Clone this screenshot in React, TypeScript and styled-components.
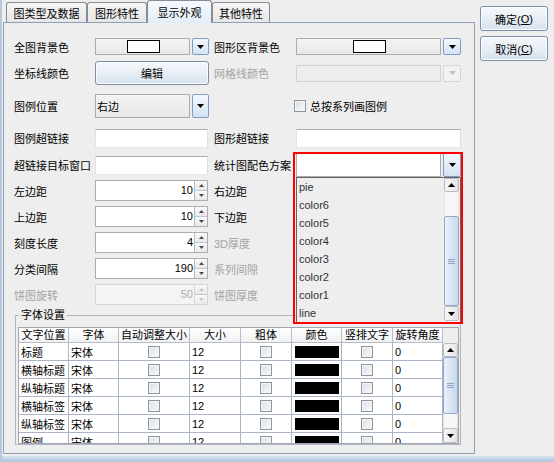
import styled, { createGlobalStyle } from "styled-components";

const GlobalStyle = createGlobalStyle`
  * { box-sizing: border-box; }
  html, body { margin: 0; padding: 0; background: #eeeeee; }
  body {
    font-family: "Liberation Sans", "Noto Sans CJK SC", sans-serif;
    font-size: 11px;
    color: #000;
  }
`;

const Dialog = styled.div`
  width: 554px;
  height: 462px;
  display: flex;
  flex-direction: column;
  background: #eeeeee;
  border-left: 2px solid #b7c8dc;
  overflow: hidden;
`;

const Main = styled.div`
  flex: 1;
  display: flex;
  min-height: 0;
`;

const BottomFrame = styled.div`
  height: 6px;
  background: linear-gradient(#d7e3f0, #aec3dc);
`;

const TabPane = styled.div`
  width: 472px;
  margin-left: 1px;
  display: flex;
  flex-direction: column;
  padding-bottom: 2px;
`;

const TabStrip = styled.div`
  height: 22px;
  display: flex;
  align-items: flex-end;
  padding-left: 3px;
`;

const Tab = styled.div<{ $w: number; $active?: boolean }>`
  width: ${(p) => p.$w}px;
  height: ${(p) => (p.$active ? 23 : 20)}px;
  margin-bottom: ${(p) => (p.$active ? -1 : 0)}px;
  position: relative;
  z-index: ${(p) => (p.$active ? 1 : 0)};
  border: 1px solid #898c95;
  border-bottom: none;
  border-radius: 3px 3px 0 0;
  background: ${(p) =>
    p.$active
      ? "linear-gradient(#f4f8fd, #e3edf8)"
      : "linear-gradient(#f7f7f7, #e6e6e6)"};
  display: flex;
  align-items: center;
  justify-content: center;
  white-space: nowrap;
`;

const Panel = styled.div`
  flex: 1;
  border: 1px solid #8e9fb6;
  background: #eeeeee;
  padding-left: 10px;
  display: flex;
  flex-direction: column;
`;

const FormRow = styled.div<{ $h: number; $mt: number }>`
  display: grid;
  grid-template-columns: 81px 114px 87px 165px;
  align-items: center;
  height: ${(p) => p.$h}px;
  margin-top: ${(p) => p.$mt}px;
`;

const Label = styled.div<{ $disabled?: boolean; $right?: boolean }>`
  white-space: nowrap;
  color: ${(p) => (p.$disabled ? "#a3a3a3" : "#000")};
  padding-left: ${(p) => (p.$right ? 5 : 0)}px;
`;

const TextField = styled.div<{ $w: number }>`
  width: ${(p) => p.$w}px;
  height: 19px;
  background: #fff;
  border: 1px solid;
  border-color: #abadb3 #dbdfe6 #e3e9ef #e2e3ea;
`;

const Spinner = styled.div<{ $disabled?: boolean }>`
  width: 113px;
  height: 21px;
  display: flex;
  border: 1px solid ${(p) => (p.$disabled ? "#d5d5d5" : "#abadb3")};
  background: ${(p) => (p.$disabled ? "#f4f4f4" : "#fff")};
`;

const SpinValue = styled.div<{ $disabled?: boolean }>`
  flex: 1;
  text-align: right;
  padding-right: 1px;
  line-height: 19px;
  color: ${(p) => (p.$disabled ? "#a8b0bc" : "#000")};
`;

const SpinButtons = styled.div<{ $disabled?: boolean }>`
  width: 13px;
  display: flex;
  flex-direction: column;
  border-left: 1px solid ${(p) => (p.$disabled ? "#d5d5d5" : "#b4b8bf")};
`;

const SpinBtn = styled.div`
  flex: 1;
  display: flex;
  align-items: center;
  justify-content: center;
  background: linear-gradient(#fafafa, #e8e8e8);
  & + & {
    border-top: 1px solid #c3c6cb;
  }
`;

const Combo = styled.div<{ $w: number; $h: number }>`
  width: ${(p) => p.$w}px;
  height: ${(p) => p.$h}px;
  display: flex;
  gap: 2px;
`;

const ComboBody = styled.div<{ $tone: "gray" | "white" | "off" }>`
  flex: 1;
  display: flex;
  align-items: center;
  padding-left: 1px;
  border: 1px solid ${(p) => (p.$tone === "off" ? "#d2d2d2" : "#acacac")};
  background: ${(p) =>
    p.$tone === "white"
      ? "#fff"
      : p.$tone === "off"
      ? "#eeeeee"
      : "linear-gradient(#f3f3f3, #e8e8e8)"};
`;

const ArrowBtn = styled.div<{ $w: number; $disabled?: boolean }>`
  width: ${(p) => p.$w}px;
  display: flex;
  align-items: center;
  justify-content: center;
  border: 1px solid ${(p) => (p.$disabled ? "#d2d5da" : "#7f9dc2")};
  border-radius: 2px;
  background: ${(p) =>
    p.$disabled ? "#f2f2f2" : "linear-gradient(#f3f8fd, #d3e2f3)"};
`;

const Swatch = styled.div`
  width: 33px;
  height: 13px;
  margin: 0 auto;
  background: #fff;
  border: 1px solid #000;
`;

const PushButton = styled.div<{ $w: number; $h: number }>`
  width: ${(p) => p.$w}px;
  height: ${(p) => p.$h}px;
  display: flex;
  align-items: center;
  justify-content: center;
  border: 1px solid #7d8ea6;
  border-radius: 3px;
  background: linear-gradient(#f6f9fc, #d7e2ee);
  box-shadow: inset 0 0 0 1px #fbfdff;
  white-space: nowrap;
`;

const CheckRow = styled.div`
  display: flex;
  align-items: center;
  gap: 4px;
  margin-left: -2px;
`;

const CheckBox = styled.span`
  display: inline-block;
  width: 12px;
  height: 12px;
  border: 1px solid #8e959e;
  background: linear-gradient(135deg, #d9dfe6, #f9fafb);
  box-shadow: inset 0 0 0 1px #f3f5f7;
`;

const ComboWrap = styled.div`
  position: relative;
`;

const Popup = styled.div`
  position: absolute;
  top: 100%;
  left: 0;
  width: 165px;
  height: 146px;
  border: 1px solid #646464;
  background: #eeeeee;
  display: flex;
  padding-right: 1px;
  z-index: 5;
`;

const ItemList = styled.div`
  flex: 1;
`;

const Item = styled.div`
  height: 18px;
  line-height: 18px;
  padding-left: 2px;
  color: #333;
`;

const Highlight = styled.div`
  position: absolute;
  left: -3px;
  top: -1px;
  width: 170px;
  height: 172px;
  border: 2px solid #ff0000;
  z-index: 6;
  pointer-events: none;
`;

const Group = styled.fieldset`
  margin: 4px 0 0 1px;
  width: 446px;
  padding: 5px 1px 0 2px;
  border: 1px solid #b0b6be;
  min-width: 0;
`;

const GroupTitle = styled.legend`
  padding: 0 2px;
  margin-left: 1px;
  line-height: 13px;
  font-size: 11px;
`;

const cols = [50, 50, 71, 51, 51, 50, 51, 50];
const gridCols = cols.map((c) => c + "px").join(" ");

const ScrollPane = styled.div`
  display: flex;
  border: 1px solid #a0a7b0;
  background: #eeeeee;
`;

const TableView = styled.div`
  width: 424px;
  display: flex;
  flex-direction: column;
`;

const HeaderRow = styled.div`
  display: grid;
  grid-template-columns: ${gridCols};
  height: 15px;
`;

const HeadCell = styled.div`
  border-right: 1px solid #b9bec6;
  border-bottom: 1px solid #b9bec6;
  background: linear-gradient(#ffffff, #f0f1f3);
  text-align: center;
  line-height: 14px;
  white-space: nowrap;
  overflow: hidden;
`;

const TableBody = styled.div`
  height: 100px;
  overflow: hidden;
  background: #fff;
`;

const BodyRow = styled.div`
  display: grid;
  grid-template-columns: ${gridCols};
  height: 18px;
`;

const Cell = styled.div<{ $center?: boolean }>`
  border-right: 1px solid #aab5c5;
  border-bottom: 1px solid #aab5c5;
  display: flex;
  align-items: center;
  justify-content: ${(p) => (p.$center ? "center" : "flex-start")};
  padding-left: ${(p) => (p.$center ? 0 : 2)}px;
  white-space: nowrap;
  overflow: hidden;
`;

const ColorChip = styled.div`
  width: 44px;
  height: 12px;
  background: #000;
`;

const SideColumn = styled.div`
  width: 15px;
  display: flex;
  flex-direction: column;
`;

const HeaderCorner = styled.div`
  height: 15px;
`;

const Bar = styled.div`
  width: 15px;
  display: flex;
  flex-direction: column;
  background: #f3f3f3;
`;

const BarArrow = styled.div<{ $h: number }>`
  height: ${(p) => p.$h}px;
  display: flex;
  align-items: center;
  justify-content: center;
  border: 1px solid #b9bdc3;
  border-radius: 2px;
  background: linear-gradient(90deg, #f7f7f7, #e4e4e4);
`;

const BarTrack = styled.div<{ $h: number }>`
  height: ${(p) => p.$h}px;
  border-left: 1px solid #e2e2e2;
  border-right: 1px solid #e2e2e2;
  background: #f6f6f6;
`;

const BarThumb = styled.div<{ $h: number }>`
  height: ${(p) => p.$h}px;
  display: flex;
  align-items: center;
  justify-content: center;
  border: 1px solid #92a8c6;
  border-radius: 2px;
  background: linear-gradient(90deg, #eaf1fa, #c9d9ed);
`;

const ButtonColumn = styled.div`
  display: flex;
  flex-direction: column;
  gap: 5px;
  padding: 6px 0 0 5px;
`;

const Mnemonic = styled.span`
  text-decoration: underline;
`;

function Down({ color = "#000" }: { color?: string }) {
  return (
    <svg width="7" height="4" viewBox="0 0 7 4">
      <polygon points="0,0 7,0 3.5,4" fill={color} />
    </svg>
  );
}

function Up({ color = "#000" }: { color?: string }) {
  return (
    <svg width="7" height="4" viewBox="0 0 7 4">
      <polygon points="0,4 7,4 3.5,0" fill={color} />
    </svg>
  );
}

function Tiny({ up, color }: { up?: boolean; color: string }) {
  return (
    <svg width="5" height="3" viewBox="0 0 5 3">
      <polygon points={up ? "0,3 5,3 2.5,0" : "0,0 5,0 2.5,3"} fill={color} />
    </svg>
  );
}

function Grip() {
  return (
    <svg width="7" height="5" viewBox="0 0 7 5">
      <path d="M0 0.5H7M0 2.5H7M0 4.5H7" stroke="#8ea4c2" strokeWidth="1" />
    </svg>
  );
}

function ScrollBar({
  arrow,
  before,
  thumb,
  after,
  down,
}: {
  arrow: number;
  before: number;
  thumb: number;
  after: number;
  down: number;
}) {
  return (
    <Bar>
      <BarArrow $h={arrow}>
        <Up />
      </BarArrow>
      <BarTrack $h={before} />
      <BarThumb $h={thumb}>
        <Grip />
      </BarThumb>
      <BarTrack $h={after} />
      <BarArrow $h={down}>
        <Down />
      </BarArrow>
    </Bar>
  );
}

function NumberSpinner({ value, disabled }: { value: string; disabled?: boolean }) {
  const c = disabled ? "#c0c6cf" : "#4a4a4a";
  return (
    <Spinner $disabled={disabled}>
      <SpinValue $disabled={disabled}>{value}</SpinValue>
      <SpinButtons $disabled={disabled}>
        <SpinBtn>
          <Tiny up color={c} />
        </SpinBtn>
        <SpinBtn>
          <Tiny color={c} />
        </SpinBtn>
      </SpinButtons>
    </Spinner>
  );
}

const tabs = [
  { name: "图类型及数据", w: 81 },
  { name: "图形特性", w: 60 },
  { name: "显示外观", w: 65, active: true },
  { name: "其他特性", w: 58 },
];

const spinRows = [
  { left: "左边距", value: "10", right: "右边距" },
  { left: "上边距", value: "10", right: "下边距" },
  { left: "刻度长度", value: "4", right: "3D厚度", rightOff: true },
  { left: "分类间隔", value: "190", right: "系列间隙", rightOff: true },
  { left: "饼图旋转", value: "50", right: "饼图厚度", leftOff: true, rightOff: true },
];

const schemes = ["pie", "color6", "color5", "color4", "color3", "color2", "color1", "line"];

const headers = ["文字位置", "字体", "自动调整大小", "大小", "粗体", "颜色", "竖排文字", "旋转角度"];

const fontRows = ["标题", "横轴标题", "纵轴标题", "横轴标签", "纵轴标签", "图例"];

export default function App() {
  return (
    <>
      <GlobalStyle />
      <Dialog>
        <Main>
          <TabPane>
            <TabStrip>
              {tabs.map((t) => (
                <Tab key={t.name} $w={t.w} $active={t.active}>
                  {t.name}
                </Tab>
              ))}
            </TabStrip>
            <Panel>
              <FormRow $h={21} $mt={13}>
                <Label>全图背景色</Label>
                <Combo $w={114} $h={17}>
                  <ComboBody $tone="gray">
                    <Swatch />
                  </ComboBody>
                  <ArrowBtn $w={17}>
                    <Down />
                  </ArrowBtn>
                </Combo>
                <Label $right>图形区背景色</Label>
                <Combo $w={165} $h={17}>
                  <ComboBody $tone="gray">
                    <Swatch />
                  </ComboBody>
                  <ArrowBtn $w={18}>
                    <Down />
                  </ArrowBtn>
                </Combo>
              </FormRow>

              <FormRow $h={26} $mt={3}>
                <Label>坐标线颜色</Label>
                <PushButton $w={114} $h={24}>编辑</PushButton>
                <Label $right $disabled>
                  网格线颜色
                </Label>
                <Combo $w={165} $h={17}>
                  <ComboBody $tone="off" />
                  <ArrowBtn $w={18} $disabled>
                    <Down color="#b3c3d8" />
                  </ArrowBtn>
                </Combo>
              </FormRow>

              <FormRow $h={24} $mt={8}>
                <Label>图例位置</Label>
                <Combo $w={114} $h={24}>
                  <ComboBody $tone="gray">右边</ComboBody>
                  <ArrowBtn $w={17}>
                    <Down />
                  </ArrowBtn>
                </Combo>
                <span />
                <CheckRow>
                  <CheckBox />
                  总按系列画图例
                </CheckRow>
              </FormRow>

              <FormRow $h={20} $mt={10}>
                <Label>图例超链接</Label>
                <TextField $w={113} />
                <Label $right>图形超链接</Label>
                <TextField $w={165} />
              </FormRow>

              <FormRow $h={24} $mt={5}>
                <Label>超链接目标窗口</Label>
                <TextField $w={113} />
                <Label $right>统计图配色方案</Label>
                <ComboWrap>
                  <Combo $w={165} $h={24}>
                    <ComboBody $tone="white" />
                    <ArrowBtn $w={18}>
                      <Down />
                    </ArrowBtn>
                  </Combo>
                  <Popup>
                    <ItemList>
                      {schemes.map((s) => (
                        <Item key={s}>{s}</Item>
                      ))}
                    </ItemList>
                    <ScrollBar arrow={14} before={24} thumb={90} after={0} down={15} />
                  </Popup>
                  <Highlight />
                </ComboWrap>
              </FormRow>

              {spinRows.map((r, i) => (
                <FormRow key={r.left} $h={21} $mt={i === 0 ? 3 : 5}>
                  <Label $disabled={r.leftOff}>{r.left}</Label>
                  <NumberSpinner value={r.value} disabled={r.leftOff} />
                  <Label $right $disabled={r.rightOff}>
                    {r.right}
                  </Label>
                </FormRow>
              ))}

              <Group>
                <GroupTitle>字体设置</GroupTitle>
                <ScrollPane>
                  <TableView>
                    <HeaderRow>
                      {headers.map((h) => (
                        <HeadCell key={h}>{h}</HeadCell>
                      ))}
                    </HeaderRow>
                    <TableBody>
                      {fontRows.map((r) => (
                        <BodyRow key={r}>
                          <Cell>{r}</Cell>
                          <Cell>宋体</Cell>
                          <Cell $center>
                            <CheckBox />
                          </Cell>
                          <Cell>12</Cell>
                          <Cell $center>
                            <CheckBox />
                          </Cell>
                          <Cell $center>
                            <ColorChip />
                          </Cell>
                          <Cell $center>
                            <CheckBox />
                          </Cell>
                          <Cell>0</Cell>
                        </BodyRow>
                      ))}
                    </TableBody>
                  </TableView>
                  <SideColumn>
                    <HeaderCorner />
                    <ScrollBar arrow={14} before={0} thumb={57} after={14} down={15} />
                  </SideColumn>
                </ScrollPane>
              </Group>
            </Panel>
          </TabPane>
          <ButtonColumn>
            <PushButton $w={68} $h={25}>
              确定(<Mnemonic>O</Mnemonic>)
            </PushButton>
            <PushButton $w={68} $h={25}>
              取消(<Mnemonic>C</Mnemonic>)
            </PushButton>
          </ButtonColumn>
        </Main>
        <BottomFrame />
      </Dialog>
    </>
  );
}
